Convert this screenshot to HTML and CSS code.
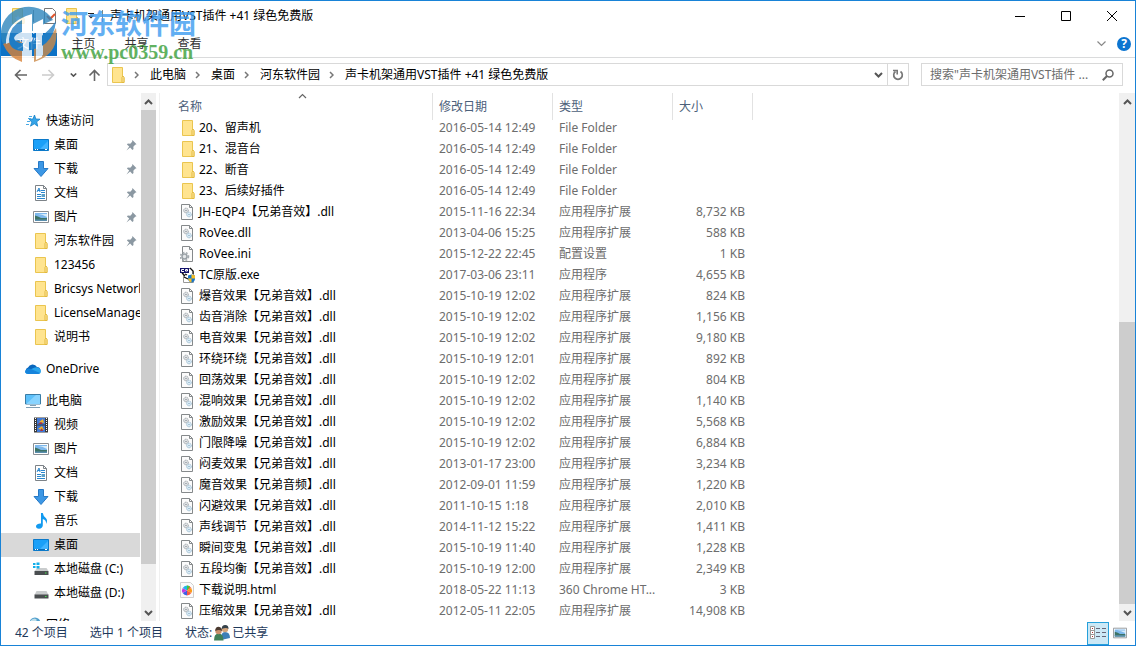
FILE: index.html
```html
<!DOCTYPE html>
<html lang="zh-CN">
<head>
  <meta charset="UTF-8">
  <meta name="viewport" content="width=device-width, initial-scale=1.0">
  <title>声卡机架通用VST插件 +41 绿色免费版</title>
  <link rel="stylesheet" href="styles.css">
</head>
<body>
  <!-- Icon set -->
  <svg class="sprite" aria-hidden="true">
    <symbol id="folder" viewBox="0 0 16 16">
      <path d="M2.500.5h10v9l1.500 1v5h-11.500z" fill="#ffe48f" stroke="#eac54f"/>
      <path d="M12 15.500v-5l1-1.500 1 1.500v5z" fill="#ffe9a2" stroke="#e3b93e"/>
    </symbol>
    <symbol id="dll" viewBox="0 0 16 16">
      <path d="M1.500.5h8l3 3v12h-11z" fill="#fbfbfb" stroke="#85898b"/>
      <path d="M9.500.5v3h3" fill="none" stroke="#85898b"/>
      <circle cx="6" cy="6.500" r="2.300" fill="#e8eaec" stroke="#8f989e" stroke-dasharray="1.200 .6"/>
      <circle cx="6" cy="6.500" r=".8" fill="#8f989e"/>
      <circle cx="9" cy="10.500" r="2.300" fill="#e3f0f8" stroke="#8db3cc" stroke-dasharray="1.200 .6"/>
      <circle cx="9" cy="10.500" r=".8" fill="#8db3cc"/>
    </symbol>
    <symbol id="ini" viewBox="0 0 16 16">
      <path d="M2.500.5h7l3 3v12h-10z" fill="#fbfbfb" stroke="#85898b"/>
      <path d="M9.500.5v3h3" fill="none" stroke="#85898b"/>
      <circle cx="4.500" cy="10.500" r="4" fill="none" stroke="#a4abb0" stroke-width="1.600" stroke-dasharray="1.800 1.500"/>
      <circle cx="4.500" cy="10.500" r="2.500" fill="#e4e7e9" stroke="#9aa1a6" stroke-width="1.500"/>
    </symbol>
    <symbol id="exe" viewBox="0 0 16 16">
      <path d="M3.500 1.500h7l3 3v11h-10z" fill="#fff" stroke="#999"/>
      <path d="M0 1h9v5H0z" fill="#10106a"/>
      <path d="M4 2.500H1.500v2H4M5.500 2.500h2v1.500h-2z" fill="none" stroke="#fff"/>
      <path d="M10 1l3 3v3M2 6l3 3M5 7l2 1M4 10l4 2" fill="none" stroke="#111" stroke-width="1.300"/>
      <path d="M8 8.500l3.500-1 3.500 1v3q0 3-3.500 4.300Q8 14.500 8 11.500z" fill="#1976c9"/>
      <path d="M11.500 7.500l3.500 1v3h-3.500zM8 11.500h3.500v4.300Q8.400 14.500 8 11.500z" fill="#f7bd20"/>
    </symbol>
    <symbol id="html" viewBox="0 0 16 16">
      <path d="M.5.5h10l3 3v12H.5z" fill="#fafafa" stroke="#cfcfcf"/>
      <path d="M7 8.500V3.500A5 5 0 0 1 11.300 6z" fill="#fa5943"/>
      <path d="M7 8.500L11.300 6a5 5 0 0 1 0 5z" fill="#fb9a17"/>
      <path d="M7 8.500l4.300 2.500A5 5 0 0 1 7 13.500z" fill="#fa5943"/>
      <path d="M7 8.500v5A5 5 0 0 1 2.700 11z" fill="#3d61e6"/>
      <path d="M7 8.500L2.700 11a5 5 0 0 1 0-5z" fill="#c33be0"/>
      <path d="M7 8.500L2.700 6A5 5 0 0 1 7 3.500z" fill="#21b6e8"/>
      <path d="M7 8.500V3.500a5 5 0 0 1 3 1z" fill="#42c83f"/>
    </symbol>
    <symbol id="star" viewBox="0 0 16 16">
      <path d="M9.500 2l1.300 4 4.200.2-3.300 2.600 1 4.400-3.400-2.400-3.800 2.400 1.300-4-2.600-3 3.700-.2z" fill="#35a4e8" stroke="#1380c8" stroke-width=".8"/>
      <path d="M3 5.500h3M2 8.500h3M1 11.500h3M4 3.500h3" stroke="#49a9e4"/>
    </symbol>
    <symbol id="desktop" viewBox="0 0 16 16">
      <path d="M.5 2.500h15v11H.5z" fill="#1ba0f8" stroke="#0b79c9"/>
      <path d="M6 13L15 4v9z" fill="#42b4ff"/>
      <path d="M1 12.500h14" stroke="#0b6db8"/>
      <path d="M2 12.500h1M4 12.500h1M12 12.500h2" stroke="#fff"/>
    </symbol>
    <symbol id="download" viewBox="0 0 16 16">
      <path d="M5.500.5h5v7h4.500L8 15.500 1 7.500h4.500z" fill="#3c97e5" stroke="#2679c6"/>
    </symbol>
    <symbol id="doc" viewBox="0 0 16 16">
      <path d="M2.500.5h8l3 3v12h-11z" fill="#fff" stroke="#7d8388"/>
      <path d="M10.500.5v3h3" fill="none" stroke="#7d8388"/>
      <path d="M4 7l2-4 1 4M4.500 5.500h3M8 5.500h4M8 7.500h4M4 9.500h4M4 11.500h4M4 13.500h8" fill="none" stroke="#2b87cf"/>
      <path d="M8.500 9h3.500v3H8.500z" fill="#5aa0c8"/>
    </symbol>
    <symbol id="picture" viewBox="0 0 16 16">
      <path d="M.5 2.500h15v11H.5z" fill="#fff" stroke="#8a8f94"/>
      <path d="M2 4h12v8H2z" fill="#7db8ec"/>
      <path d="M5 5q4 0 9 3V5z" fill="#d8ecfa"/>
      <path d="M2 6.500q4 1 6 2.500h6v3H2z" fill="#3d7366"/>
      <path d="M2 10.500h12V12H2z" fill="#5a8fae"/>
    </symbol>
    <symbol id="cloud" viewBox="0 0 16 16">
      <path d="M3.500 13A3.300 3.300 0 0 1 3 6.600 5 5 0 0 1 12 6a3.600 3.600 0 0 1 1 7z" fill="#0a67bd"/>
      <path d="M0 11l9-4.300q4-1.500 6.500 1.800Q17 12.500 13 13H3.500Q.5 13 0 11z" fill="#2aa5ec"/>
      <path d="M0 11Q0 8 3.500 7.500L6 8l9 4q-1 1-2 1H3.500Q.5 13 0 11z" fill="#1684dc"/>
    </symbol>
    <symbol id="pc" viewBox="0 0 16 16">
      <path d="M.5 1.500h15v9.500H.5z" fill="#5cc0fa" stroke="#3a7ca5"/>
      <path d="M1 11L11 2h4v9z" fill="#87d3ff"/>
      <path d="M5 12.500h6M1 14.500h14" stroke="#7f9fb5"/>
    </symbol>
    <symbol id="video" viewBox="0 0 16 16">
      <path d="M1 .5h14v15H1z" fill="#3a3a3a"/>
      <path d="M4 1h8v6.500H4zM4 8.500h8V15H4z" fill="#4078d6"/>
      <path d="M2.500 1v14M13.500 1v14" stroke="#fff" stroke-dasharray="1 1"/>
      <path d="M6 5l4-3 1 4zM5 12l4-3 2 4z" fill="#f2b32b"/>
      <path d="M5 7l3-2 2 2zM7 14l2-3 1 3z" fill="#b4312e"/>
    </symbol>
    <symbol id="music" viewBox="0 0 16 16">
      <path d="M8 0h1.800q.4 3 3 5 2.400 2.500.2 6 .6-4-3.200-5v6.500Q9.500 15.500 6 15.800 2.800 15.500 3 13q.7-2.700 5-2.500z" fill="#129af0"/>
    </symbol>
    <symbol id="disk" viewBox="0 0 16 16">
      <path d="M3.500 6h10l2 4h-14z" fill="#c9cccd"/>
      <path d="M1.500 9.500h14v4h-14z" fill="#4a4e50"/>
      <path d="M12 11.500h1.500" stroke="#45e04b"/>
    </symbol>
    <symbol id="sysdisk" viewBox="0 0 16 16">
      <path d="M4.500 7h9l2 3h-14z" fill="#c9cccd"/>
      <path d="M1.500 10h14v4h-14z" fill="#4a4e50"/>
      <path d="M12 12h1.500" stroke="#45e04b"/>
      <path d="M0 2h2.500v2H0zM3.500 1.500h3V4h-3zM0 5h2.500v2H0zM3.500 5h3v2.500h-3z" fill="#12aeea"/>
    </symbol>
    <symbol id="network" viewBox="0 0 16 16">
      <circle cx="10" cy="6" r="5.500" fill="#4f9fcd"/>
      <path d="M6 3q4-3 6 0l-3 3H5z" fill="#c0dfea"/>
      <path d="M1 9h8v5H1z" fill="#65bdf4" stroke="#37769b"/>
    </symbol>
    <symbol id="pin" viewBox="0 0 12 12">
      <path d="M7 0l4.500 4.500-1.500.8-2 2 .2 2.500L7 10.800 4.500 8.200.5 11.500 3.500 7.200 1 5l1-1.200 2.700.2 2-2z" fill="#8b98a2"/>
    </symbol>
    <symbol id="people" viewBox="0 0 16 16">
      <path d="M7 15q-.5-8 4-8 5 0 5 6z" fill="#3d7fb8"/>
      <circle cx="11" cy="4" r="3.200" fill="#d3a57c"/>
      <path d="M7.700 4q0-4 3.500-4 3.500 0 3.300 4-2-2-6.800 0z" fill="#35424b"/>
      <path d="M0 15.500Q0 8.500 4.500 8.500q5 0 5 7z" fill="#418059"/>
      <circle cx="4.500" cy="6" r="3.200" fill="#c98f6b"/>
      <path d="M1.200 6q0-4.300 3.500-4.300Q8 2 8 6 5 4 1.200 6z" fill="#4b3a30"/>
    </symbol>
    <symbol id="up" viewBox="0 0 9 6"><path d="M1 5l3.500-3.500L8 5" fill="none" stroke="currentColor" stroke-width="2"/></symbol>
    <symbol id="down" viewBox="0 0 9 6"><path d="M1 1l3.500 3.500L8 1" fill="none" stroke="currentColor" stroke-width="2"/></symbol>
    <symbol id="next" viewBox="0 0 5 8"><path d="M1 1l3 3-3 3" fill="none" stroke="currentColor" stroke-width="1.500"/></symbol>
  </svg>

  <div class="window">
    <header class="title-bar">
      <div class="quick-tools">
        <svg class="icon"><use href="#folder"/><path d="M8 7l1 2.200 2.400.2-1.800 1.500.6 2.300L8 12l-2 1.200.5-2.300-1.700-1.500 2.300-.2z" fill="#fff"/></svg>
        <span class="divider"></span>
        <svg class="icon" viewBox="0 0 16 16"><path d="M3.500.5h8l3 3v12h-11z" fill="#fff" stroke="#777"/><path d="M6 8l3 3 5-5" fill="none" stroke="#e2552b" stroke-width="2"/></svg>
        <svg class="icon"><use href="#folder"/></svg>
        <svg class="more" viewBox="0 0 8 6"><path d="M1 .5h6" stroke="#222"/><path d="M1 2.500h6L4 5.500z" fill="#222"/></svg>
        <span class="divider"></span>
      </div>
      <h1>声卡机架通用VST插件 +41 绿色免费版</h1>
      <div class="window-buttons">
        <button aria-label="最小化"><svg viewBox="0 0 10 10"><path d="M0 5.500h10" stroke="#000"/></svg></button>
        <button aria-label="最大化"><svg viewBox="0 0 10 10"><path d="M.5.5h9v9h-9z" fill="none" stroke="#000"/></svg></button>
        <button aria-label="关闭"><svg viewBox="0 0 10 10"><path d="M0 0l10 10M10 0L0 10" stroke="#000"/></svg></button>
      </div>
    </header>

    <nav class="ribbon">
      <button class="tab tab-file">文件</button>
      <button class="tab">主页</button>
      <button class="tab">共享</button>
      <button class="tab">查看</button>
      <button class="expand" aria-label="展开功能区"><svg class="chevron" viewBox="0 0 9 6"><path d="M.5.5l4 4 4-4" fill="none" stroke="#888" stroke-width="1.200"/></svg></button>
      <button class="help" aria-label="帮助">?</button>
    </nav>

    <div class="nav-row">
      <div class="nav-buttons">
        <button aria-label="后退"><svg class="arrow" viewBox="0 0 13 12"><path d="M13 6H1.500M6.500 1l-5 5 5 5" fill="none" stroke="#666" stroke-width="1.600"/></svg></button>
        <button aria-label="前进"><svg class="arrow" viewBox="0 0 13 12"><path d="M0 6h11.500M6.500 1l5 5-5 5" fill="none" stroke="#ccc" stroke-width="1.600"/></svg></button>
        <button class="recent" aria-label="最近"><svg viewBox="0 0 9 6"><use href="#down"/></svg></button>
        <button aria-label="向上"><svg class="arrow" viewBox="0 0 13 12"><path d="M6.500 12V1.500M1.500 6.500l5-5 5 5" fill="none" stroke="#666" stroke-width="1.600"/></svg></button>
      </div>
      <div class="address">
        <svg class="icon"><use href="#folder"/></svg>
        <svg class="next"><use href="#next"/></svg>
        <a href="#">此电脑</a>
        <svg class="next"><use href="#next"/></svg>
        <a href="#">桌面</a>
        <svg class="next"><use href="#next"/></svg>
        <a href="#">河东软件园</a>
        <svg class="next"><use href="#next"/></svg>
        <a href="#">声卡机架通用VST插件 +41 绿色免费版</a>
        <button class="history" aria-label="历史记录"><svg class="chevron"><use href="#down"/></svg></button>
        <button class="refresh" aria-label="刷新"><svg viewBox="0 0 12 12"><path d="M3.500 2.500A4.300 4.300 0 1 0 8.500 2.500" fill="none" stroke="#777" stroke-width="1.700"/><path d="M1 1.500h4.200v4" fill="none" stroke="#777" stroke-width="1.600"/></svg></button>
      </div>
      <form class="search">
        <input type="text" aria-label="搜索" placeholder="搜索&quot;声卡机架通用VST插件 ...">
        <button type="button" aria-label="搜索"><svg viewBox="0 0 12 12"><circle cx="7.500" cy="4.500" r="3.500" fill="none" stroke="#666" stroke-width="1.500"/><path d="M5 7L.8 11.200" stroke="#666" stroke-width="2"/></svg></button>
      </form>
    </div>

    <main class="content">
      <aside class="sidebar">
        <div class="tree">
          <ul>
            <li class="root"><svg class="icon"><use href="#star"/></svg>快速访问</li>
            <li><svg class="icon"><use href="#desktop"/></svg>桌面<svg class="pin"><use href="#pin"/></svg></li>
            <li><svg class="icon"><use href="#download"/></svg>下载<svg class="pin"><use href="#pin"/></svg></li>
            <li><svg class="icon"><use href="#doc"/></svg>文档<svg class="pin"><use href="#pin"/></svg></li>
            <li><svg class="icon"><use href="#picture"/></svg>图片<svg class="pin"><use href="#pin"/></svg></li>
            <li><svg class="icon"><use href="#folder"/></svg>河东软件园<svg class="pin"><use href="#pin"/></svg></li>
            <li><svg class="icon"><use href="#folder"/></svg>123456</li>
            <li><svg class="icon"><use href="#folder"/></svg>Bricsys Network</li>
            <li><svg class="icon"><use href="#folder"/></svg>LicenseManager</li>
            <li><svg class="icon"><use href="#folder"/></svg>说明书</li>
          </ul>
          <ul>
            <li class="root"><svg class="icon"><use href="#cloud"/></svg>OneDrive</li>
          </ul>
          <ul>
            <li class="root"><svg class="icon"><use href="#pc"/></svg>此电脑</li>
            <li><svg class="icon"><use href="#video"/></svg>视频</li>
            <li><svg class="icon"><use href="#picture"/></svg>图片</li>
            <li><svg class="icon"><use href="#doc"/></svg>文档</li>
            <li><svg class="icon"><use href="#download"/></svg>下载</li>
            <li><svg class="icon"><use href="#music"/></svg>音乐</li>
            <li class="selected"><svg class="icon"><use href="#desktop"/></svg>桌面</li>
            <li><svg class="icon"><use href="#sysdisk"/></svg>本地磁盘 (C:)</li>
            <li><svg class="icon"><use href="#disk"/></svg>本地磁盘 (D:)</li>
          </ul>
          <ul>
            <li class="root"><svg class="icon"><use href="#network"/></svg>网络</li>
          </ul>
        </div>
        <div class="scrollbar">
          <button aria-label="向上滚动"><svg class="chevron"><use href="#up"/></svg></button>
          <div class="track"><div class="thumb thumb-tree"></div></div>
          <button aria-label="向下滚动"><svg class="chevron"><use href="#down"/></svg></button>
        </div>
      </aside>

      <section class="files">
        <div class="file-list">
          <table>
            <thead>
              <tr>
                <th class="col-name">名称<svg class="sort" viewBox="0 0 9 6"><path d="M1 5l3.500-3.500L8 5" fill="none" stroke="#666" stroke-width="1.200"/></svg></th>
                <th class="col-date">修改日期</th>
                <th class="col-type">类型</th>
                <th class="col-size">大小</th>
              </tr>
            </thead>
            <tbody id="fileRows"></tbody>
          </table>
        </div>
        <div class="scrollbar">
          <button aria-label="向上滚动"><svg class="chevron"><use href="#up"/></svg></button>
          <div class="track track-end"><div class="thumb thumb-files"></div></div>
          <button aria-label="向下滚动"><svg class="chevron"><use href="#down"/></svg></button>
        </div>
      </section>
    </main>

    <footer class="status-bar">
      <span>42 个项目</span>
      <span>选中 1 个项目</span>
      <span class="shared">状态:<svg class="icon"><use href="#people"/></svg>已共享</span>
      <div class="view-buttons">
        <button class="active" aria-label="详细信息"><svg class="details" viewBox="0 0 16 14"><path d="M.5.5h4v12h-4zM.5 4.500h4M.5 8.500h4" fill="#fff" stroke="#999"/><path d="M2 2.500h1M2 6.500h1M2 10.500h1" stroke="#a33"/><path d="M6 2.500h4M12 2.500h4M6 6.500h4M12 6.500h4M6 10.500h4M12 10.500h4" stroke="#667"/></svg></button>
        <button aria-label="大图标"><svg class="thumbs" viewBox="0 0 16 16"><use href="#picture"/></svg></button>
      </div>
    </footer>

    <!-- Site mark over the top left corner -->
    <div class="watermark">
      <svg viewBox="0 0 58 58">
        <path d="M1 30A28 27 0 0 1 53 14Q38 20 30 27 14 30 5 40 1 36 1 30z" fill="#2f86bd"/>
        <path d="M3 38Q12 34 22 36v20Q9 52 3 38z" fill="#d98237"/>
        <path d="M34 40Q50 34 56 22 60 48 34 56z" fill="#cc8a48"/>
        <path d="M6 34Q8 17 26 10l6-2v48H22V34Q14 34 6 38z" fill="#fff"/>
        <path d="M22 18l6-4v38h-5zM33 18l10-5v36l-6 4V26l-4 2z" fill="#fff"/>
        <path d="M9 33Q10 20 22 14v12q-7 2-8 6 1 5 9 5 18-1 33-22-3 28-32 30Q9 45 9 33z" fill="#237fc5"/>
        <path d="M23 19l6-4v40h-6zM34 20l8-5v36l-6 3V27h-2z" fill="#fff"/>
      </svg>
      <div>
        <p class="mark-name">河东软件园</p>
        <p class="mark-url">www.pc0359.cn</p>
      </div>
    </div>
  </div>

  <script src="script.js"></script>
</body>
</html>
```

FILE: styles.css
```css
* {
  box-sizing: border-box;
}
body {
  margin: 0;
  font-family: "Noto Sans", "Noto Sans CJK SC", sans-serif;
  font-size: 12px;
  line-height: 20px;
  color: #000;
  background-color: #fff;
}
button {
  font: inherit;
  color: #555;
  background: none;
  border: none;
  padding: 0;
  display: flex;
  align-items: center;
  justify-content: center;
}
svg {
  display: block;
  flex-shrink: 0;
}
.sprite {
  position: absolute;
  width: 0;
  height: 0;
}
.icon {
  width: 16px;
  height: 16px;
}
.chevron {
  width: 9px;
  height: 6px;
}
.window {
  position: relative;
  display: flex;
  flex-direction: column;
  height: 100vh;
  border: 1px solid #1883d7;
  overflow: hidden;
}

/* Title bar */
.title-bar {
  display: flex;
  align-items: center;
  height: 30px;
  flex-shrink: 0;
  padding-left: 9px;
}
.quick-tools {
  display: flex;
  align-items: center;
  gap: 7px;
}
.quick-tools .more {
  width: 8px;
  height: 6px;
}
.divider {
  width: 1px;
  height: 12px;
  background-color: #888;
}
h1 {
  margin: 0 0 0 7px;
  flex: 1;
  font-size: 12px;
  font-weight: normal;
  white-space: nowrap;
}
.window-buttons {
  display: flex;
}
.window-buttons button {
  width: 46px;
  height: 29px;
}
.window-buttons svg {
  width: 10px;
  height: 10px;
}

/* Ribbon tabs */
.ribbon {
  display: flex;
  align-items: center;
  height: 27px;
  flex-shrink: 0;
  padding-right: 4px;
  border-bottom: 1px solid #dadbdc;
}
.tab {
  width: 53px;
  height: 23px;
  color: #333;
}
.tab-file {
  width: 56px;
  color: #fff;
  background-color: #0c72c6;
}
.expand {
  margin-left: auto;
  margin-right: 11px;
}
.help {
  width: 14px;
  height: 14px;
  border-radius: 50%;
  color: #fff;
  background-color: #0c75d0;
  font-weight: bold;
}

/* Address and search */
.nav-row {
  display: flex;
  align-items: flex-start;
  height: 35px;
  flex-shrink: 0;
  padding: 5px 12px 0 13px;
}
.nav-buttons {
  display: flex;
  align-items: center;
  width: 93px;
  height: 23px;
  gap: 15px;
}
.nav-buttons svg {
  width: 13px;
  height: 12px;
}
.nav-buttons .recent svg {
  width: 7px;
  height: 6px;
}
.nav-buttons .recent {
  margin-right: -4px;
}
.address {
  display: flex;
  align-items: center;
  flex: 1;
  height: 23px;
  padding-left: 2px;
  border: 1px solid #d9d9d9;
}
.address a {
  color: #000;
  text-decoration: none;
  white-space: nowrap;
}
.next {
  width: 5px;
  height: 8px;
  margin: 0 11px 0 9px;
  color: #777;
}
.address .icon + .next {
  margin-left: 8px;
}
.history {
  margin-left: auto;
  margin-right: 4px;
}
.refresh {
  width: 21px;
  height: 21px;
  border-left: 1px solid #d9d9d9;
}
.refresh svg,
.search svg {
  width: 12px;
  height: 12px;
}
.search {
  display: flex;
  align-items: center;
  width: 202px;
  height: 23px;
  margin-left: 12px;
  padding: 0 8px;
  border: 1px solid #d9d9d9;
}
.search input {
  flex: 1;
  min-width: 0;
  padding: 0;
  border: none;
  outline: none;
  font: inherit;
}
.search input::placeholder {
  color: #6d6d6d;
}

/* Folder tree */
.content {
  display: flex;
  flex: 1;
  min-height: 0;
}
.sidebar {
  display: flex;
  width: 159px;
  padding-right: 3px;
  border-right: 1px solid #f0f0f0;
}
.tree {
  flex: 1;
  min-width: 0;
  padding-top: 16px;
  overflow: hidden;
}
.tree ul {
  margin: 0 0 8px;
  padding: 0;
  list-style: none;
}
.tree li {
  display: flex;
  align-items: center;
  gap: 5px;
  height: 24px;
  padding-left: 32px;
  white-space: nowrap;
  overflow: hidden;
}
.tree .root {
  padding-left: 24px;
}
.tree .selected {
  background-color: #d9d9d9;
}
.pin {
  width: 11px;
  height: 11px;
  margin-left: auto;
  margin-right: 3px;
}

/* Scroll bars */
.scrollbar {
  display: flex;
  flex-direction: column;
  width: 16px;
  flex-shrink: 0;
  background-color: #f0f0f0;
}
.sidebar .scrollbar {
  width: 15px;
  margin-left: 1px;
}
.scrollbar button {
  height: 17px;
  flex-shrink: 0;
}
.track {
  display: flex;
  flex: 1;
}
.track-end {
  align-items: flex-end;
}
.thumb {
  width: 100%;
  background-color: #cdcdcd;
}
.thumb-tree {
  height: 92%;
}
.thumb-files {
  height: 57%;
}

/* File list */
.files {
  display: flex;
  flex: 1;
  min-width: 0;
}
.file-list {
  flex: 1;
  overflow: hidden;
}
table {
  width: 593px;
  table-layout: fixed;
  border-collapse: collapse;
}
th {
  position: relative;
  height: 24px;
  padding: 3px 6px 0;
  color: #4c607a;
  font-weight: normal;
  line-height: 20px;
  text-align: left;
}
th::after {
  content: "";
  position: absolute;
  top: 0;
  right: 0;
  width: 1px;
  height: 27px;
  background-color: #e2e2e2;
}
.col-name {
  width: 273px;
  padding-left: 18px;
}
.col-date,
.col-type {
  width: 120px;
}
.col-size {
  width: 80px;
}
.sort {
  position: absolute;
  top: 0;
  left: 138px;
  width: 9px;
  height: 6px;
}
td {
  height: 21px;
  padding: 0 6px;
  color: #6d6d6d;
  white-space: nowrap;
}
.name {
  padding-left: 20px;
  color: #000;
}
.name span {
  display: flex;
  align-items: center;
  gap: 3px;
}
.size {
  padding-right: 8px;
  text-align: right;
}

/* Status bar */
.status-bar {
  display: flex;
  align-items: center;
  height: 24px;
  flex-shrink: 0;
  gap: 22px;
  padding-left: 14px;
  color: #1e395b;
}
.shared {
  display: flex;
  align-items: center;
  gap: 2px;
}
.view-buttons {
  display: flex;
  margin-left: auto;
}
.view-buttons button {
  width: 22px;
  height: 23px;
  border: 1px solid transparent;
}
.view-buttons .active {
  border-color: #26a0da;
  background-color: #cbe8f6;
}
.details {
  width: 16px;
  height: 14px;
}
.thumbs {
  width: 14px;
  height: 14px;
}
.view-buttons button:last-child {
  margin-right: 4px;
}

/* Site mark */
.watermark {
  position: absolute;
  top: 5px;
  left: -1px;
  display: flex;
  gap: 3px;
  opacity: 0.8;
  pointer-events: none;
}
.watermark svg {
  width: 58px;
  height: 58px;
}
.watermark p {
  margin: 0;
  font-weight: bold;
  white-space: nowrap;
}
.mark-name {
  color: #3d9cf0;
  font-size: 27px;
  line-height: 36px;
}
.mark-url {
  color: #3aa03a;
  font-family: "Liberation Serif", serif;
  font-size: 20px;
  line-height: 20px;
}
```

FILE: script.js
```js
// icon, name, modified, type, size
const files = [
  ['folder', '20、留声机', '2016-05-14 12:49', 'File Folder', ''],
  ['folder', '21、混音台', '2016-05-14 12:49', 'File Folder', ''],
  ['folder', '22、断音', '2016-05-14 12:49', 'File Folder', ''],
  ['folder', '23、后续好插件', '2016-05-14 12:49', 'File Folder', ''],
  ['dll', 'JH-EQP4【兄弟音效】.dll', '2015-11-16 22:34', '应用程序扩展', '8,732 KB'],
  ['dll', 'RoVee.dll', '2013-04-06 15:25', '应用程序扩展', '588 KB'],
  ['ini', 'RoVee.ini', '2015-12-22 22:45', '配置设置', '1 KB'],
  ['exe', 'TC原版.exe', '2017-03-06 23:11', '应用程序', '4,655 KB'],
  ['dll', '爆音效果【兄弟音效】.dll', '2015-10-19 12:02', '应用程序扩展', '824 KB'],
  ['dll', '齿音消除【兄弟音效】.dll', '2015-10-19 12:02', '应用程序扩展', '1,156 KB'],
  ['dll', '电音效果【兄弟音效】.dll', '2015-10-19 12:02', '应用程序扩展', '9,180 KB'],
  ['dll', '环绕环绕【兄弟音效】.dll', '2015-10-19 12:01', '应用程序扩展', '892 KB'],
  ['dll', '回荡效果【兄弟音效】.dll', '2015-10-19 12:02', '应用程序扩展', '804 KB'],
  ['dll', '混响效果【兄弟音效】.dll', '2015-10-19 12:02', '应用程序扩展', '1,140 KB'],
  ['dll', '激励效果【兄弟音效】.dll', '2015-10-19 12:02', '应用程序扩展', '5,568 KB'],
  ['dll', '门限降噪【兄弟音效】.dll', '2015-10-19 12:02', '应用程序扩展', '6,884 KB'],
  ['dll', '闷麦效果【兄弟音效】.dll', '2013-01-17 23:00', '应用程序扩展', '3,234 KB'],
  ['dll', '魔音效果【兄弟音频】.dll', '2012-09-01 11:59', '应用程序扩展', '1,220 KB'],
  ['dll', '闪避效果【兄弟音效】.dll', '2011-10-15 1:18', '应用程序扩展', '2,010 KB'],
  ['dll', '声线调节【兄弟音效】.dll', '2014-11-12 15:22', '应用程序扩展', '1,411 KB'],
  ['dll', '瞬间变鬼【兄弟音效】.dll', '2015-10-19 11:40', '应用程序扩展', '1,228 KB'],
  ['dll', '五段均衡【兄弟音效】.dll', '2015-10-19 12:00', '应用程序扩展', '2,349 KB'],
  ['html', '下载说明.html', '2018-05-22 11:13', '360 Chrome HT...', '3 KB'],
  ['dll', '压缩效果【兄弟音效】.dll', '2012-05-11 22:05', '应用程序扩展', '14,908 KB']
];

document.getElementById('fileRows').innerHTML = files.map(([icon, name, date, type, size]) => `
  <tr>
    <td class="name"><span><svg class="icon"><use href="#${icon}"/></svg>${name}</span></td>
    <td>${date}</td>
    <td>${type}</td>
    <td class="size">${size}</td>
  </tr>`).join('');
```
